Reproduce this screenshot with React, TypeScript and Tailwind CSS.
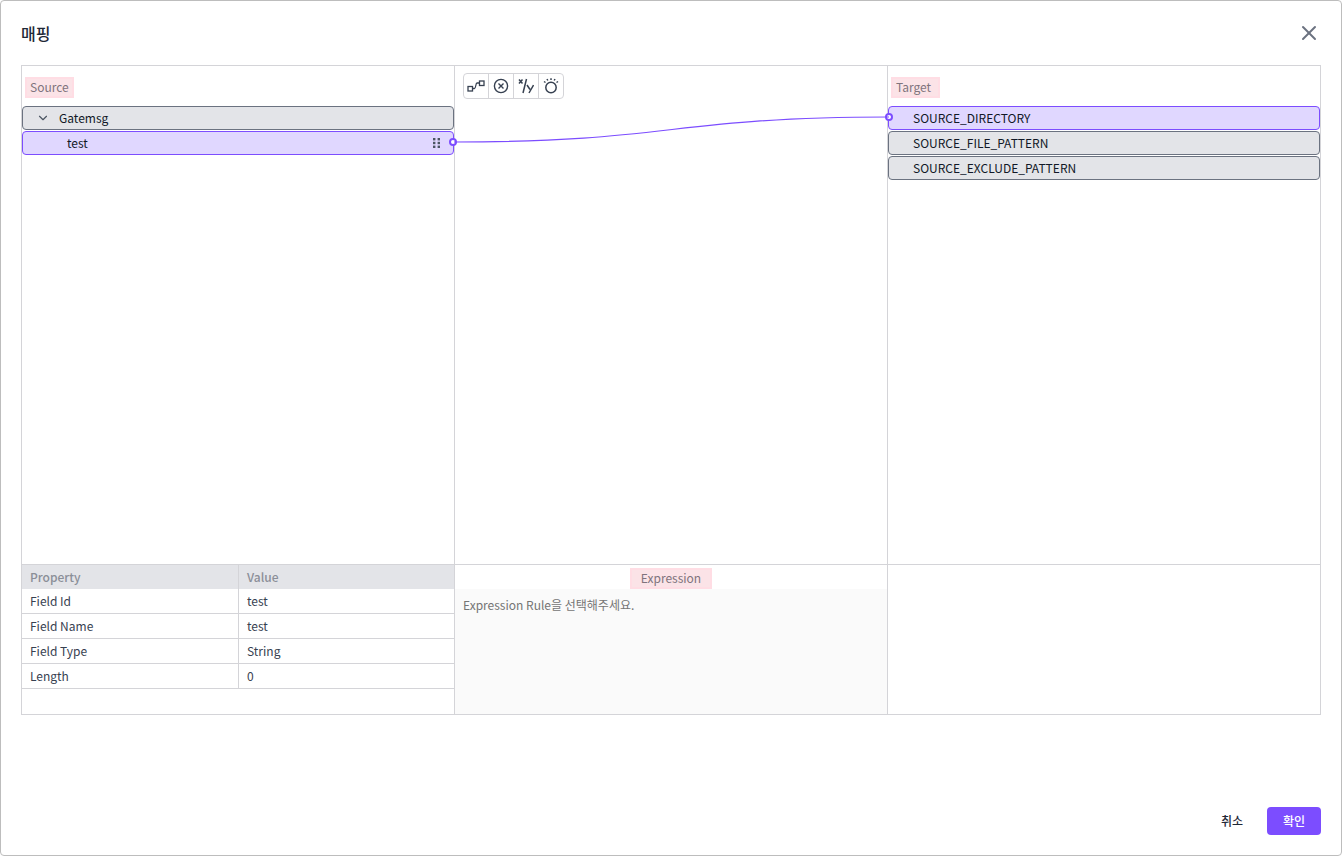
import { ChevronDown, X } from "lucide-react";

const font = { fontFamily: '"Noto Sans CJK KR", "Noto Sans", sans-serif' };

const properties = [
  ["Field Id", "test"],
  ["Field Name", "test"],
  ["Field Type", "String"],
  ["Length", "0"],
];

const targets = ["SOURCE_DIRECTORY", "SOURCE_FILE_PATTERN", "SOURCE_EXCLUDE_PATTERN"];

function Label({ text, className }: { text: string; className: string }) {
  return (
    <span className={`inline-block h-[21px] border-2 border-[#ffdde4] bg-[#fbe3e7] text-xs leading-[15px] text-[#7f747d] ${className}`}>
      {text}
    </span>
  );
}

function Handle({ side }: { side: "left" | "right" }) {
  return (
    <span
      className={
        side === "left"
          ? "absolute left-[-4px] top-[6px] h-2 w-2 rounded-full border-2 border-[#7c4dff] bg-white"
          : "absolute right-[-4px] top-[6px] h-2 w-2 rounded-full border-2 border-[#7c4dff] bg-white"
      }
    />
  );
}

function Toolbar() {
  const cell = "flex h-full w-[25px] items-center justify-center border-l border-[#d4d4d8] first:w-[24px] first:border-l-0";
  return (
    <div className="flex h-[26px] w-[101px] items-center rounded border border-[#d4d4d8] text-[#374151]">
      <div className={cell}>
        <svg width="18" height="14" viewBox="0 0 18 14" fill="none" stroke="currentColor" strokeWidth="1.3">
          <rect x="1" y="7.5" width="4.5" height="4.5" />
          <rect x="12.5" y="2" width="4.5" height="4.5" />
          <path d="M5.5 9.5h2c1.5 0 1-5.5 2.5-5.5h2.5" />
        </svg>
      </div>
      <div className={cell}>
        <svg width="16" height="16" viewBox="0 0 16 16" fill="none" stroke="currentColor" strokeWidth="1.4">
          <circle cx="8" cy="8" r="6.6" />
          <path d="M5.5 5.5l5 5M10.5 5.5l-5 5" />
        </svg>
      </div>
      <div className={cell}>
        <svg width="16" height="16" viewBox="0 0 16 16" fill="none" stroke="currentColor" strokeWidth="1.5">
          <path d="M1 1.5l3.5 4M4.5 1.5L1 5.5M8.5 1L5 15" />
          <path d="M9 7l3 4.5M15.5 7L11 15" />
        </svg>
      </div>
      <div className={cell}>
        <svg width="16" height="16" viewBox="0 0 16 16" fill="none" stroke="currentColor" strokeWidth="1.5">
          <circle cx="8" cy="9.5" r="5.2" />
          <path d="M1 3.5l1.5 1M4 1l.8 1.5M8 .3v1.7M12 1l-.8 1.5M15 3.5l-1.5 1" />
        </svg>
      </div>
    </div>
  );
}

export default function App() {
  return (
    <div className="flex h-[856px] w-[1342px] flex-col overflow-hidden rounded-[4px] border border-[#bdbdbd] bg-white text-xs text-[#1f2937]" style={font}>
      <div className="flex h-[64px] items-center justify-between pl-5 pr-5">
        <h2 className="text-base font-medium leading-5 text-[#1f2937]">매핑</h2>
        <X className="h-6 w-6 text-[#6b7280]" strokeWidth={2} />
      </div>

      <div className="relative mx-5 grid h-[650px] grid-cols-[433px_433px_432px] grid-rows-[498px_150px] border border-[#d4d4d8]">
        <div className="border-r border-[#d4d4d8]">
          <div className="flex h-[40px] items-start pl-[3px] pt-[11px]">
            <Label text="Source" className="px-[3px]" />
          </div>
          <div className="flex flex-col gap-[1px]">
            <div className="flex h-6 items-center rounded border border-[#6b7280] bg-[#e3e4e8] pl-[13px] text-[#111827]">
              <ChevronDown className="h-[14px] w-[14px] text-[#4b5563]" />
              <span className="ml-[9px]">Gatemsg</span>
            </div>
            <div className="relative flex h-6 items-center rounded border border-[#7c4dff] bg-[#e0d7ff] pl-[44px] pr-[12px] text-[#111827]">
              <span className="flex-1">test</span>
              <svg width="9" height="12" viewBox="0 0 9 12" fill="#4b5563">
                <rect x="1" y="1" width="2.4" height="2.4" />
                <rect x="5.6" y="1" width="2.4" height="2.4" />
                <rect x="1" y="4.8" width="2.4" height="2.4" />
                <rect x="5.6" y="4.8" width="2.4" height="2.4" />
                <rect x="1" y="8.6" width="2.4" height="2.4" />
                <rect x="5.6" y="8.6" width="2.4" height="2.4" />
              </svg>
              <Handle side="right" />
            </div>
          </div>
        </div>

        <div className="border-r border-[#d4d4d8] pl-2 pt-[7px]">
          <Toolbar />
        </div>

        <div className="pt-[11px]">
          <div className="h-[29px] pl-[3px]">
            <Label text="Target" className="pl-[3px] pr-[7px]" />
          </div>
          <div className="flex flex-col gap-[1px]">
            {targets.map((name, i) => (
              <div
                key={name}
                className={
                  i === 0
                    ? "relative flex h-6 items-center rounded border border-[#7c4dff] bg-[#e0d7ff] pl-6 text-[#111827]"
                    : "flex h-6 items-center rounded border border-[#6b7280] bg-[#e3e4e8] pl-6 text-[#111827]"
                }
              >
                {name}
                {i === 0 && <Handle side="left" />}
              </div>
            ))}
          </div>
        </div>

        <div className="border-r border-t border-[#d4d4d8]">
          <div className="grid h-6 grid-cols-[217px_1fr] bg-[#e3e4e8] font-medium text-[#8b8f98]">
            <div className="border-r border-[#d4d4d8] pl-2 leading-6">Property</div>
            <div className="pl-2 leading-6">Value</div>
          </div>
          {properties.map(([key, value]) => (
            <div key={key} className="grid h-[25px] grid-cols-[217px_1fr] border-b border-[#d4d4d8] text-[#374151]">
              <div className="border-r border-[#d4d4d8] pl-2 leading-6">{key}</div>
              <div className="pl-2 leading-6">{value}</div>
            </div>
          ))}
        </div>

        <div className="flex flex-col border-r border-t border-[#d4d4d8]">
          <div className="flex h-6 items-start justify-center pt-[3px]">
            <Label text="Expression" className="px-[9px]" />
          </div>
          <div className="flex-1 bg-[#fafafa] px-2 pt-[6px] leading-5 text-[#757575]">Expression Rule을 선택해주세요.</div>
        </div>

        <div className="border-t border-[#d4d4d8]" />

        <svg className="pointer-events-none absolute left-[430px] top-[48px]" width="440" height="30" fill="none">
          <path d="M2 28C220 28 220 3 437 3" stroke="#7c4dff" strokeWidth="1.2" />
        </svg>
      </div>

      <div className="flex flex-1 items-end justify-end gap-[13px] pb-[20px] pr-5">
        <button className="h-7 w-[44px] text-xs font-medium text-[#1f2937]">취소</button>
        <button className="h-7 w-[54px] rounded bg-[#7c4dff] text-xs font-medium text-white">확인</button>
      </div>
    </div>
  );
}
